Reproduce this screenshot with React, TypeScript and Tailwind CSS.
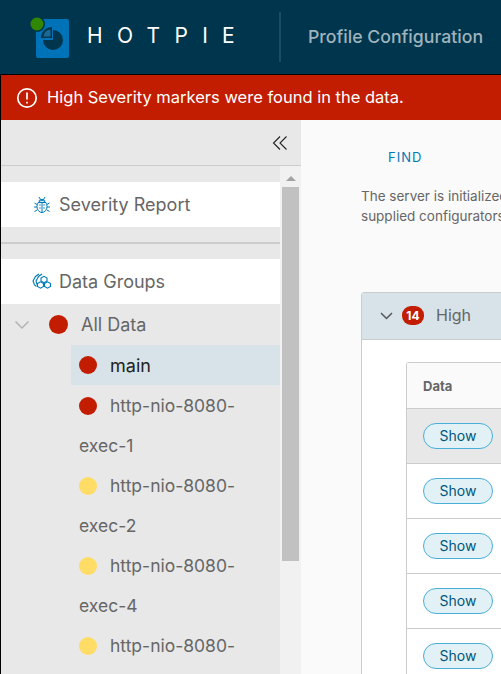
const FONT = "font-['Inter','Noto_Sans',sans-serif]"

function Logo() {
  return (
    <svg width="46" height="46" viewBox="0 0 46 46" className="shrink-0">
      <rect x="7" y="4" width="33" height="39" rx="2" fill="#0072b8" />
      <path d="M24 15 a10 10 0 1 1 -10 10 h10 z" fill="#00364d" />
      <path d="M23 12 v11 h-11 a11 11 0 0 1 11 -11 z" fill="#00364d" />
      <path d="M21.5 14.5 v7 h-7 a8 8 0 0 1 7 -7 z" fill="#1a6a97" />
      <circle cx="8" cy="9" r="8" fill="#00364d" />
      <circle cx="8" cy="9" r="6.5" fill="#318700" />
    </svg>
  )
}

function BugIcon() {
  return (
    <svg width="18" height="18" viewBox="0 0 18 18" fill="none" stroke="#0079b8" strokeWidth="1">
      <ellipse cx="9" cy="10.5" rx="5" ry="6" />
      <path d="M5 6.5h8M9 6.5v10M6 5c0-2 6-2 6 0M6 1l1.5 2.5M12 1l-1.5 2.5M1.5 7l2.5 1.5M16.5 7L14 8.5M1 11h3M17 11h-3M1.5 15.5L4 14M16.5 15.5L14 14" />
      <path d="M6.5 9h1M10.5 9h1M6.5 12h1M10.5 12h1" strokeWidth="1.4" />
    </svg>
  )
}

function GroupsIcon() {
  return (
    <svg width="20" height="18" viewBox="0 0 20 18" fill="none" stroke="#0079b8" strokeWidth="1.1">
      <path d="M9 10.5l3-1.7 3 1.7v3l-3 1.7-3-1.7z" transform="translate(-3.5 0)" />
      <path d="M9 10.5l3-1.7 3 1.7v3l-3 1.7-3-1.7z" transform="translate(3.5 0)" />
      <path d="M9 10.5l3-1.7 3 1.7v3l-3 1.7-3-1.7z" transform="translate(0 -5.5)" />
      <path d="M7 1L3.5 3.5 1 8l1.5 4 2 1.5M10 1L6.5 3.5 4 8l1 3.5" />
    </svg>
  )
}

function Dot({ color, size }: { color: string; size: string }) {
  return <span className={`inline-block shrink-0 rounded-full ${size} ${color}`} />
}

function ThreadItem({ label, color }: { label: string; color: string }) {
  return (
    <div className="pl-[78px] pr-[20px] text-[17.5px] leading-[40px] text-[#666666]">
      <Dot color={color} size="w-[18px] h-[18px] align-[-3px]" />
      <span className="ml-[13px]">{label}</span>
    </div>
  )
}

function ShowRow({ active }: { active?: boolean }) {
  return (
    <div className={`flex h-[55px] items-center border-b border-[#cccccc] pl-[16px] ${active ? 'bg-[#e8e8e8]' : 'bg-white'}`}>
      <button className="h-[26px] w-[70px] rounded-full border border-[#49afd9] bg-[#e1f1f6] text-[14px] text-[#00567a]">
        Show
      </button>
    </div>
  )
}

function Sidebar() {
  return (
    <aside className="flex h-full w-[300px] shrink-0 flex-col bg-[#e8e8e8]">
      <div className="flex h-[46px] shrink-0 items-center justify-end border-b border-[#cccccc] pr-[13px]">
        <svg width="16" height="16" viewBox="0 0 16 16" fill="none" stroke="#222222" strokeWidth="1.1">
          <path d="M8 1.5L1.5 8 8 14.5M14.5 1.5L8 8l6.5 6.5" />
        </svg>
      </div>
      <div className="flex min-h-0 flex-1">
        <div className="w-[279px] shrink-0 overflow-hidden pt-[16px]">
          <div className="flex h-[45px] items-center gap-[8px] bg-white pl-[32px] text-[18px] text-[#666666]">
            <BugIcon />
            Severity Report
          </div>
          <div className="my-[15px] h-[2px] bg-[#cccccc]" />
          <div className="flex h-[45px] items-center gap-[7px] bg-white pl-[31px] text-[18px] text-[#666666]">
            <GroupsIcon />
            Data Groups
          </div>
          <div className="flex h-[41px] items-center text-[18px] text-[#666666]">
            <svg width="16" height="10" viewBox="0 0 16 10" fill="none" stroke="#b3b3b3" strokeWidth="1.5" className="ml-[13px]">
              <path d="M1.5 1.5L8 8l6.5-6.5" />
            </svg>
            <Dot color="bg-[#c21d00]" size="w-[19px] h-[19px] ml-[19px]" />
            <span className="ml-[13px]">All Data</span>
          </div>
          <div className="ml-[70px] flex h-[40px] items-center bg-[#d8e3e9] pl-[8px] text-[18px] text-[#222222]">
            <Dot color="bg-[#c21d00]" size="w-[18px] h-[18px]" />
            <span className="ml-[13px]">main</span>
          </div>
          <div className="pt-[1px]">
            <ThreadItem label="http-nio-8080-exec-1" color="bg-[#c21d00]" />
            <ThreadItem label="http-nio-8080-exec-2" color="bg-[#ffdc66]" />
            <ThreadItem label="http-nio-8080-exec-4" color="bg-[#ffdc66]" />
            <ThreadItem label="http-nio-8080-exec-5" color="bg-[#ffdc66]" />
          </div>
        </div>
        <div className="flex w-[21px] shrink-0 flex-col items-center bg-[#f1f1f1]">
          <div className="mt-[10px] h-0 w-0 border-x-[5px] border-b-[5px] border-x-transparent border-b-[#a3a3a3]" />
          <div className="mt-[6px] h-[374px] w-[17px] bg-[#c1c1c1]" />
        </div>
      </div>
    </aside>
  )
}

export default function App() {
  return (
    <div className={`flex h-[674px] w-[501px] flex-col overflow-hidden bg-[#fafafa] ${FONT}`}>
      <header className="flex h-[75px] shrink-0 items-center border-b border-black bg-[#00364d]">
        <div className="ml-[29px] mt-[2px]">
          <Logo />
        </div>
        <span className="mb-[2px] ml-[12px] w-[192px] shrink-0 text-[21px] font-normal tracking-[0.68em] text-white">HOTPIE</span>
        <div className="h-[50px] w-[2px] shrink-0 bg-[#1c4c61]" />
        <span className="ml-[27px] whitespace-nowrap text-[17.7px] font-medium text-[#9fb3bd]">Profile Configuration</span>
      </header>
      <div className="flex h-[45px] shrink-0 items-center gap-[9px] border-l border-black bg-[#c21d00] pl-[15px] text-[16.5px] text-white">
        <svg width="22" height="22" viewBox="0 0 22 22" fill="none" stroke="white" strokeWidth="1.7">
          <circle cx="11" cy="11" r="9.2" />
          <path d="M11 5.5v7M11 14.8v1.8" />
        </svg>
        High Severity markers were found in the data.
      </div>
      <div className="flex min-h-0 flex-1 border-l border-black">
        <Sidebar />
        <main className="min-w-0 flex-1 overflow-hidden pl-[60px]">
          <div className="ml-[27px] mt-[28px] text-[13px] tracking-[0.08em] text-[#0079b8]">FIND</div>
          <p className="mt-[18px] w-[300px] whitespace-nowrap text-[13.5px] leading-[20px] text-[#666666]">
            The server is initialized with the
            <br />
            supplied configurators.
          </p>
          <section className="mt-[66px] w-[300px] rounded-t-[3px] border border-[#cccccc] bg-white">
            <div className="flex h-[47px] items-center border-b border-[#cccccc] bg-[#d8e3e9] pl-[18px]">
              <svg width="13" height="8" viewBox="0 0 13 8" fill="none" stroke="#565656" strokeWidth="1.5">
                <path d="M1 1l5.5 5.5L12 1" />
              </svg>
              <span className="ml-[9px] flex h-[19px] w-[22px] items-center justify-center rounded-[9px] bg-[#c21d00] text-[12px] font-bold text-white">14</span>
              <span className="ml-[12px] pb-[1px] text-[16px] text-[#666666]">High</span>
            </div>
            <div className="pl-[44px] pt-[22px]">
              <div className="rounded-tl-[3px] border-l border-t border-[#cccccc]">
                <div className="flex h-[46px] items-center border-b border-[#cccccc] bg-[#fafafa] pl-[16px] pt-[4px] text-[13px] font-bold text-[#666666]">
                  Data
                </div>
                <ShowRow active />
                <ShowRow />
                <ShowRow />
                <ShowRow />
                <ShowRow />
              </div>
            </div>
          </section>
        </main>
      </div>
    </div>
  )
}
